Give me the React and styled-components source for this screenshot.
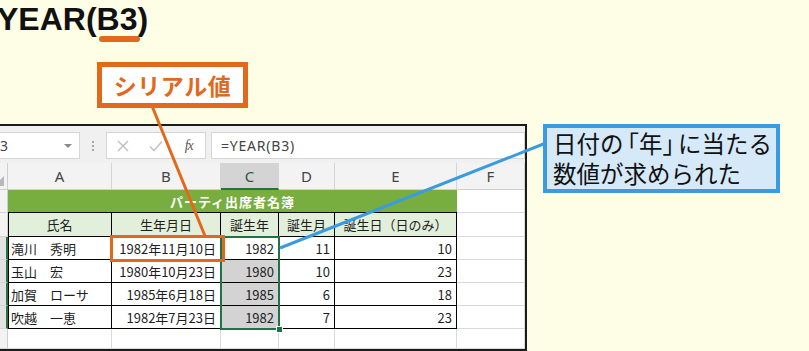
import React from 'react';
import styled, { createGlobalStyle } from 'styled-components';

const ORANGE = '#e2691c';
const BLUE = '#3a9be0';
const XL_GREEN = '#217346';

const GlobalStyle = createGlobalStyle`
  html, body {
    margin: 0;
    padding: 0;
    background: #fefde6;
  }
  body {
    font-family: "Noto Sans CJK JP", "Noto Sans", sans-serif;
  }
`;

const Page = styled.div`
  position: relative;
  width: 809px;
  height: 351px;
  overflow: hidden;
  background: #fefde6;
  display: flex;
  flex-direction: column;
`;

const Title = styled.h1`
  margin: 3px 0 0 -3px;
  font: bold 32px/1 "Liberation Sans", Arial, sans-serif;
  color: #111;
`;

const Marked = styled.span`
  position: relative;
  &::after {
    content: '';
    position: absolute;
    left: 2px;
    right: -3px;
    top: 35px;
    height: 6px;
    border-radius: 3px;
    background: ${ORANGE};
  }
`;

const Window = styled.div`
  margin: 89px 0 0 -30px;
  width: 557px;
  height: 227px;
  box-sizing: border-box;
  border: 2px solid #1b1b1b;
  background: #fff;
  display: flex;
  flex-direction: column;
  overflow: hidden;
`;

const Toolbar = styled.div`
  height: 37px;
  flex: none;
  background: #f0f0f0;
  display: flex;
  align-items: center;
  padding-top: 2px;
  box-sizing: border-box;
`;

const Field = styled.div`
  height: 27px;
  box-sizing: border-box;
  background: #fff;
  border: 1px solid #d6d6d6;
  display: flex;
  align-items: center;
  font: 14px "Noto Sans", "Noto Sans CJK JP", sans-serif;
  color: #444;
`;

const NameBox = styled(Field)`
  width: 108px;
  padding-left: 18px;
`;

const Caret = styled.span`
  margin-left: auto;
  margin-right: 7px;
  border-left: 4px solid transparent;
  border-right: 4px solid transparent;
  border-top: 4px solid #8a8a8a;
`;

const Grip = styled.div`
  width: 2px;
  height: 10px;
  margin: 0 12px 0 12px;
  background: repeating-linear-gradient(to bottom, #a8a8a8 0 2px, transparent 2px 4px);
`;

const FuncBox = styled(Field)`
  width: 100px;
`;

const FuncSlot = styled.span`
  width: 33px;
  display: flex;
  justify-content: center;
  align-items: center;
`;

const Fx = styled.span`
  font: italic 14px "Liberation Serif", serif;
  color: #555;
  letter-spacing: -1px;
`;

const FormulaInput = styled(Field)`
  flex: 1;
  margin-left: 5px;
  padding-left: 9px;
  letter-spacing: 0.8px;
`;

const Sheet = styled.div`
  position: relative;
  flex: 1;
  display: grid;
  grid-template-columns: 36px 104px 109px 58px 56px 122px 1fr;
  grid-template-rows: 27px 23px 24px 23px 23px 23px 23px 1fr;
  font-size: 13px;
`;

const Corner = styled.div`
  position: relative;
  background: #f3f3f3;
  border-right: 1px solid #cfcfcf;
  border-bottom: 1px solid #cfcfcf;
  &::after {
    content: '';
    position: absolute;
    right: 3px;
    bottom: 3px;
    border-left: 10px solid transparent;
    border-bottom: 10px solid #b9b9b9;
  }
`;

const ColHead = styled.div`
  box-sizing: border-box;
  display: flex;
  align-items: center;
  justify-content: center;
  font: 15px "Noto Sans", sans-serif;
  color: ${p => (p.$active ? '#2b5b3c' : '#444')};
  background: ${p => (p.$active ? '#d4d4d4' : '#f3f3f3')};
  border-right: 1px solid #d4d4d4;
  border-bottom: ${p => (p.$active ? `2px solid ${XL_GREEN}` : '1px solid #cfcfcf')};
`;

const RowHead = styled.div`
  box-sizing: border-box;
  background: ${p => (p.$active ? '#e2e2e2' : '#f3f3f3')};
  border-bottom: 1px solid #d4d4d4;
  border-right: ${p => (p.$active ? `2px solid ${XL_GREEN}` : '1px solid #cfcfcf')};
`;

const Cell = styled.div`
  box-sizing: border-box;
  display: flex;
  align-items: center;
  justify-content: ${p =>
    p.$align === 'right' ? 'flex-end' : p.$align === 'center' ? 'center' : 'flex-start'};
  padding: 0 4px 0 ${p => (p.$align === 'left' ? '3px' : '4px')};
  color: #1e1e1e;
  white-space: nowrap;
  overflow: hidden;
  background: ${p => p.$bg || '#fff'};
  border-right: 1px solid ${p => (p.$table ? '#000' : '#dadada')};
  border-bottom: 1px solid ${p => (p.$table ? '#000' : '#dadada')};
  box-shadow: ${p => (p.$first ? 'inset 1px 0 0 #000' : 'none')};
`;

const TitleCell = styled(Cell)`
  grid-column: span 5;
  justify-content: center;
  background: #78ae3f;
  color: #fff;
  font-weight: bold;
  letter-spacing: 1px;
  border-right: none;
  border-bottom: 1px solid #000;
`;

const Selection = styled.div`
  position: absolute;
  left: 248px;
  top: 73px;
  width: 60px;
  height: 94px;
  box-sizing: border-box;
  border: 2px solid ${XL_GREEN};
  pointer-events: none;
  &::after {
    content: '';
    position: absolute;
    right: -5px;
    bottom: -5px;
    width: 5px;
    height: 5px;
    background: ${XL_GREEN};
    border: 1px solid #fff;
  }
`;

const CellMark = styled.div`
  position: absolute;
  left: 110px;
  top: 235px;
  width: 115px;
  height: 27px;
  box-sizing: border-box;
  border: 3px solid ${ORANGE};
`;

const Leaders = styled.svg`
  position: absolute;
  left: 0;
  top: 0;
  pointer-events: none;
`;

const Callout = styled.div`
  position: absolute;
  box-sizing: border-box;
  font-family: "Noto Sans CJK JP", sans-serif;
`;

const SerialNote = styled(Callout)`
  left: 97px;
  top: 62px;
  width: 151px;
  height: 46px;
  border: 5px solid ${ORANGE};
  background: #fff;
  color: ${ORANGE};
  font-size: 23px;
  font-weight: bold;
  display: flex;
  align-items: center;
  justify-content: center;
  letter-spacing: 0.5px;
`;

const ResultNote = styled(Callout)`
  left: 543px;
  top: 124px;
  width: 237px;
  height: 69px;
  border: 4px solid ${BLUE};
  background: #d5e9f8;
  color: #111;
  font-size: 23.5px;
  line-height: 30px;
  padding: 0 0 0 6px;
  white-space: nowrap;
`;

const Bracket = styled.span`
  margin-left: ${p => (p.$open ? '-8px' : '0')};
  margin-right: ${p => (p.$open ? '0' : '-8px')};
`;

const cols = ['A', 'B', 'C', 'D', 'E', 'F'];

const people = [
  { name: '滝川　秀明', date: '1982年11月10日', year: 1982, month: 11, day: 10 },
  { name: '玉山　宏', date: '1980年10月23日', year: 1980, month: 10, day: 23 },
  { name: '加賀　ローサ', date: '1985年6月18日', year: 1985, month: 6, day: 18 },
  { name: '吹越　一恵', date: '1982年7月23日', year: 1982, month: 7, day: 23 },
];

const heads = ['氏名', '生年月日', '誕生年', '誕生月', '誕生日（日のみ）'];

export default function App() {
  return (
    <Page>
      <GlobalStyle />
      <Title>
        YEAR(<Marked>B3</Marked>)
      </Title>

      <Window>
        <Toolbar>
          <NameBox>
            B3
            <Caret />
          </NameBox>
          <Grip />
          <FuncBox>
            <FuncSlot>
              <svg width="12" height="12" viewBox="0 0 12 12">
                <path d="M1 1 L11 11 M11 1 L1 11" stroke="#bdbdbd" strokeWidth="1.4" />
              </svg>
            </FuncSlot>
            <FuncSlot>
              <svg width="14" height="12" viewBox="0 0 14 12">
                <path d="M1 6.5 L5 10.5 L13 1.5" stroke="#c4c4c4" strokeWidth="1.6" fill="none" />
              </svg>
            </FuncSlot>
            <FuncSlot>
              <Fx>fx</Fx>
            </FuncSlot>
          </FuncBox>
          <FormulaInput>=YEAR(B3)</FormulaInput>
        </Toolbar>

        <Sheet>
          <Corner />
          {cols.map(c => (
            <ColHead key={c} $active={c === 'C'}>
              {c}
            </ColHead>
          ))}

          <RowHead />
          <TitleCell>パーティ出席者名簿</TitleCell>
          <Cell />

          <RowHead />
          {heads.map((h, i) => (
            <Cell key={h} $align="center" $bg="#e2efda" $table $first={i === 0}>
              {h}
            </Cell>
          ))}
          <Cell />

          {people.map((p, i) => (
            <React.Fragment key={p.name}>
              <RowHead $active />
              <Cell $align="left" $table $first>
                {p.name}
              </Cell>
              <Cell $align="right" $table>
                {p.date}
              </Cell>
              <Cell $align="right" $table $bg={i > 0 ? '#d3d3d3' : undefined}>
                {p.year}
              </Cell>
              <Cell $align="right" $table>
                {p.month}
              </Cell>
              <Cell $align="right" $table>
                {p.day}
              </Cell>
              <Cell />
            </React.Fragment>
          ))}

          <RowHead />
          {cols.map(c => (
            <Cell key={c} />
          ))}

          <Selection />
        </Sheet>
      </Window>

      <CellMark />

      <Leaders width="809" height="351">
        <line x1="152" y1="106" x2="205" y2="236" stroke={ORANGE} strokeWidth="3" />
        <line x1="280" y1="248" x2="546" y2="143" stroke={BLUE} strokeWidth="3" />
      </Leaders>

      <SerialNote>シリアル値</SerialNote>
      <ResultNote>
        日付の<Bracket $open>「</Bracket>年<Bracket>」</Bracket>に当たる
        <br />
        数値が求められた
      </ResultNote>
    </Page>
  );
}
